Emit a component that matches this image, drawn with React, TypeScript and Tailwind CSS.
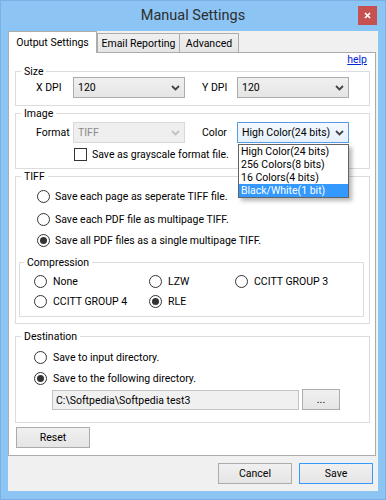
import React from "react";

const Chevron = ({ color = "#444444" }: { color?: string }) => (
  <svg width="9" height="6" viewBox="0 0 9 6">
    <path d="M1 1l3.5 3.5L8 1" fill="none" stroke={color} strokeWidth="1.8" />
  </svg>
);

type ComboProps = {
  value: string;
  variant?: "normal" | "disabled" | "focused";
  children?: React.ReactNode;
};

function Combo({ value, variant = "normal", children }: ComboProps) {
  const look =
    variant === "disabled"
      ? "border-[#d9d9d9] bg-[#efefef] text-[#8a8a8a]"
      : variant === "focused"
        ? "border-[#569de5] bg-linear-to-b from-[#f4f9fe] to-[#e6f1fc] text-black"
        : "border-[#acacac] bg-linear-to-b from-[#f0f0f0] to-[#e5e5e5] text-black";
  return (
    <div className={`relative w-[112px] h-[21px] border flex items-center justify-between pl-[4px] pr-[4px] ${look}`}>
      <span className="leading-[13px]">{value}</span>
      <Chevron color={variant === "disabled" ? "#c2c2c2" : "#444444"} />
      {children}
    </div>
  );
}

function Radio({ label, checked = false, gap }: { label: string; checked?: boolean; gap: string }) {
  return (
    <div className={`flex items-center h-[13px] ${gap}`}>
      <span className="w-[13px] h-[13px] shrink-0 rounded-full border border-[#333333] bg-white flex items-center justify-center">
        {checked && <span className="w-[7px] h-[7px] rounded-full bg-[#333333]" />}
      </span>
      <span className="leading-[13px] whitespace-nowrap">{label}</span>
    </div>
  );
}

function Group({
  title,
  legend = "ml-[5px]",
  className = "",
  children,
}: {
  title: string;
  legend?: string;
  className?: string;
  children: React.ReactNode;
}) {
  return (
    <fieldset className={`border border-[#dcdcdc] ${className}`}>
      <legend className={`px-[3px] leading-[11px] ${legend}`}>{title}</legend>
      {children}
    </fieldset>
  );
}

function Button({ label, primary = false, className = "" }: { label: string; primary?: boolean; className?: string }) {
  return (
    <button
      className={`h-[21px] border bg-linear-to-b from-[#f0f0f0] to-[#e5e5e5] flex items-center justify-center leading-[13px] ${
        primary ? "border-[#3399ff]" : "border-[#acacac]"
      } ${className}`}
    >
      {label}
    </button>
  );
}

const colorOptions = ["High Color(24 bits)", "256 Colors(8 bits)", "16 Colors(4 bits)", "Black/White(1 bit)"];

export default function App() {
  return (
    <div className="w-[386px] h-[500px] bg-[#8cc4f4] border border-[#79b1e4] flex flex-col [font-family:Roboto,'Liberation_Sans',sans-serif] text-[10.5px] text-black">
      {/* title bar */}
      <div className="h-[30px] grid grid-cols-[1fr_auto_1fr]">
        <div />
        <div className="leading-[30px] text-[14.5px] text-[#2e2e2e]">Manual Settings</div>
        <div className="flex justify-end pr-[8px] pt-[5px]">
          <div className="w-[19px] h-[19px] bg-[#c75050] flex items-center justify-center">
            <svg width="7" height="7" viewBox="0 0 7 7">
              <path d="M1 1l5 5M6 1L1 6" stroke="white" strokeWidth="1.7" />
            </svg>
          </div>
        </div>
      </div>

      {/* client area */}
      <div className="mx-[7px] h-[460px] bg-[#f0f0f0] flex flex-col">
        <div className="h-[21px] flex items-end relative z-10">
          <div className="w-[89px] h-[22px] -mb-px bg-white border border-b-0 border-[#acacac] flex items-center justify-center leading-[13px]">
            Output Settings
          </div>
          <div className="w-[83px] h-[19px] border border-b-0 border-[#acacac] bg-linear-to-b from-[#f0f0f0] to-[#e5e5e5] flex items-center justify-center leading-[13px]">
            Email Reporting
          </div>
          <div className="w-[59px] h-[19px] border border-b-0 border-l-0 border-[#acacac] bg-linear-to-b from-[#f0f0f0] to-[#e5e5e5] flex items-center justify-center leading-[13px]">
            Advanced
          </div>
        </div>

        <div className="w-[368px] h-[404px] bg-white border border-[#acacac] flex flex-col">
          <div className="h-[13px] flex justify-end pr-[8px] leading-[13px]">
            <span className="text-[#0026d9] underline">help</span>
          </div>

          <Group title="Size" className="ml-[6px] w-[355px] pb-[7px]">
            <div className="flex items-center h-[21px] pl-[20px]">
              <span className="w-[37px]">X DPI</span>
              <Combo value="120" />
              <span className="ml-[17px] w-[35px]">Y DPI</span>
              <Combo value="120" />
            </div>
          </Group>

          <Group title="Image" className="ml-[6px] w-[355px] mt-[2px] pb-[7px] relative z-10">
            <div className="flex items-center h-[21px] pl-[20px] mt-[3px]">
              <span className="w-[37px]">Format</span>
              <Combo value="TIFF" variant="disabled" />
              <span className="ml-[17px] w-[35px]">Color</span>
              <Combo value="High Color(24 bits)" variant="focused">
                <div className="absolute top-[21px] left-0 w-[111px] border border-[#646464] bg-white shadow-[3px_3px_4px_rgba(0,0,0,0.28)]">
                  {colorOptions.map((o, i) => (
                    <div
                      key={o}
                      className={`h-[13px] leading-[13px] pl-[2px] ${i === 3 ? "bg-[#3399ff] text-white" : "text-black"}`}
                    >
                      {o}
                    </div>
                  ))}
                </div>
              </Combo>
            </div>
            <div className="flex items-center h-[13px] pl-[58px] mt-[5px] gap-[5px]">
              <span className="w-[13px] h-[13px] border border-[#333333] bg-white" />
              <span className="leading-[13px]">Save as grayscale format file.</span>
            </div>
          </Group>

          <Group title="TIFF" className="ml-[6px] w-[355px] mt-[2px] pb-[6px]">
            <div className="flex flex-col pl-[21px]">
              <div className="mt-[8px]">
                <Radio label="Save each page as seperate TIFF file." gap="gap-[5px]" />
              </div>
              <div className="mt-[10px]">
                <Radio label="Save each PDF file as multipage TIFF." gap="gap-[5px]" />
              </div>
              <div className="mt-[8px]">
                <Radio label="Save all PDF files as a single multipage TIFF." checked gap="gap-[5px]" />
              </div>
            </div>
            <Group title="Compression" legend="ml-[4px]" className="ml-[3px] w-[345px] mt-[10px] pb-[8px]">
              <div className="grid grid-cols-[115px_86px_auto] gap-y-[7px] pl-[14px] mt-[7px]">
                <Radio label="None" gap="gap-[6px]" />
                <Radio label="LZW" gap="gap-[6px]" />
                <Radio label="CCITT GROUP 3" gap="gap-[6px]" />
                <Radio label="CCITT GROUP 4" gap="gap-[6px]" />
                <Radio label="RLE" checked gap="gap-[6px]" />
              </div>
            </Group>
          </Group>

          <Group title="Destination" className="ml-[6px] w-[355px] mt-[7px] pb-[12px]">
            <div className="flex flex-col pl-[18px]">
              <div className="mt-[9px]">
                <Radio label="Save to input directory." gap="gap-[6px]" />
              </div>
              <div className="mt-[8px]">
                <Radio label="Save to the following directory." checked gap="gap-[6px]" />
              </div>
            </div>
            <div className="flex items-end gap-[3px] pl-[36px] mt-[4px] h-[21px]">
              <div className="w-[247px] h-[20px] border border-[#c3c3c3] bg-[#f0f0f0] flex items-center pl-[3px] leading-[13px]">
                C:\Softpedia\Softpedia test3
              </div>
              <Button label="..." className="w-[38px]" />
            </div>
          </Group>

          <Button label="Reset" className="ml-[7px] mt-[4px] w-[74px]" />
        </div>

        <div className="flex justify-end gap-[7px] pr-[5px] mt-[7px]">
          <Button label="Cancel" className="w-[74px]" />
          <Button label="Save" primary className="w-[74px]" />
        </div>
      </div>
    </div>
  );
}
